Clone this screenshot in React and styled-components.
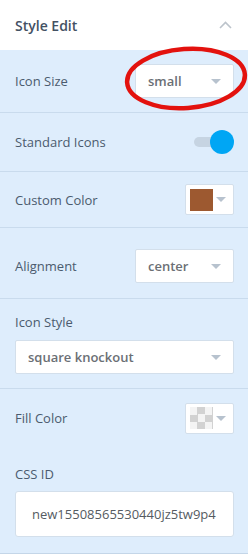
import styled, { createGlobalStyle } from 'styled-components'

const Global = createGlobalStyle`
  html, body { margin: 0; padding: 0; background: #fff; }
  body { font-family: "Open Sans", "Noto Sans", sans-serif; }
  * { box-sizing: border-box; }
`

const Panel = styled.div`
  position: relative;
  width: 248px;
  height: 554px;
  display: flex;
  flex-direction: column;
  background: #fff;
  overflow: hidden;
`

const Header = styled.div`
  height: 50px;
  display: flex;
  align-items: center;
  justify-content: space-between;
  padding: 0 16px 0 15px;
  font-size: 14px;
  font-weight: 600;
  color: #435163;
`

const Body = styled.div`
  flex: 1;
  display: flex;
  flex-direction: column;
  background: #deedfc;
  border-bottom: 1px solid #c4d6e8;
`

const Row = styled.div`
  display: flex;
  align-items: center;
  justify-content: space-between;
  padding: ${p => p.$pad || '0 14px 0 15px'};
  height: ${p => p.$h}px;
  border-bottom: ${p => (p.$noLine ? 'none' : '1px solid #c9dbed')};
`

const Stack = styled.div`
  display: flex;
  flex-direction: column;
  gap: ${p => p.$gap || 9}px;
  padding: ${p => p.$pad};
  height: ${p => p.$h}px;
  border-bottom: ${p => (p.$noLine ? 'none' : '1px solid #c9dbed')};
`

const Label = styled.span`
  font-size: 13px;
  color: #4b5b6e;
`

const Select = styled.div`
  width: ${p => p.$w || '99px'};
  height: 34px;
  background: #fff;
  border: 1px solid #d3dfeb;
  border-radius: 2px;
  display: flex;
  align-items: center;
  justify-content: space-between;
  padding: 0 12px 0 12px;
  font-size: 13px;
  font-weight: 600;
  color: #6b6f75;
`

const Arrow = styled.span`
  width: 0;
  height: 0;
  border-left: 5px solid transparent;
  border-right: 5px solid transparent;
  border-top: 5px solid #b7c2ce;
`

const ColorBox = styled.div`
  width: 49px;
  height: 31px;
  background: #fff;
  border: 1px solid #d3dfeb;
  border-radius: 2px;
  display: flex;
  align-items: center;
  justify-content: space-between;
  padding: 0 7px 0 4px;
`

const Swatch = styled.div`
  width: 23px;
  height: 22px;
  background: ${p => p.$color};
`

const Checker = styled.div`
  width: 23px;
  height: 22px;
  background-color: #f4f4f4;
  background-image: conic-gradient(#d2d2d2 25%, transparent 0 50%, #d2d2d2 0 75%, transparent 0);
  background-size: 15px 15px;
`

const Toggle = styled.div`
  position: relative;
  width: 40px;
  height: 24px;
  display: flex;
  align-items: center;
`

const Track = styled.div`
  width: 32px;
  height: 10px;
  border-radius: 5px;
  background: #c6d4e2;
`

const Knob = styled.div`
  position: absolute;
  right: 0;
  top: 0;
  width: 24px;
  height: 24px;
  border-radius: 50%;
  background: #00a6f4;
`

const TextInput = styled.div`
  width: 219px;
  height: 46px;
  background: #fff;
  border: 1px solid #d3dfeb;
  border-radius: 3px;
  display: flex;
  align-items: center;
  padding: 0 16px;
  font-size: 13px;
  color: #555b62;
`

const Ring = styled.svg`
  position: absolute;
  left: 0;
  top: 0;
  pointer-events: none;
`

export default function App() {
  return (
    <>
      <Global />
      <Panel>
        <Header>
          <span>Style Edit</span>
          <svg width="13" height="8" viewBox="0 0 13 8">
            <path d="M1 7 L6.5 1.5 L12 7" fill="none" stroke="#bcc3cb" strokeWidth="1.6" />
          </svg>
        </Header>
        <Body>
          <Row $h={63}>
            <Label>Icon Size</Label>
            <Select>
              <span>small</span>
              <Arrow />
            </Select>
          </Row>
          <Row $h={59}>
            <Label>Standard Icons</Label>
            <Toggle>
              <Track />
              <Knob />
            </Toggle>
          </Row>
          <Row $h={56}>
            <Label>Custom Color</Label>
            <ColorBox>
              <Swatch $color="#9d5930" />
              <Arrow />
            </ColorBox>
          </Row>
          <Row $h={71} $pad="6px 14px 0 15px">
            <Label>Alignment</Label>
            <Select>
              <span>center</span>
              <Arrow />
            </Select>
          </Row>
          <Stack $h={90} $pad="14px 14px 0 15px" $gap={9}>
            <Label>Icon Style</Label>
            <Select $w="219px">
              <span>square knockout</span>
              <Arrow />
            </Select>
          </Stack>
          <Row $h={58} $noLine>
            <Label>Fill Color</Label>
            <ColorBox>
              <Checker />
              <Arrow />
            </ColorBox>
          </Row>
          <Stack $h={106} $pad="18px 14px 0 15px" $gap={8} $noLine>
            <Label>CSS ID</Label>
            <TextInput>new15508565530440jz5tw9p4</TextInput>
          </Stack>
        </Body>
        <Ring width="248" height="120" viewBox="0 0 248 120">
          <ellipse cx="186" cy="78.5" rx="59" ry="29.5" fill="none" stroke="#e3120e" strokeWidth="4.5" transform="rotate(-4 186 78.5)" />
        </Ring>
      </Panel>
    </>
  )
}
